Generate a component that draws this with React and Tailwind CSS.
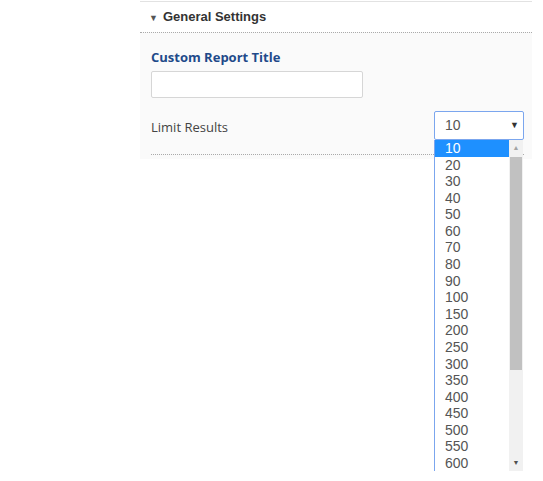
import React from 'react';

const options = [10, 20, 30, 40, 50, 60, 70, 80, 90, 100, 150, 200, 250, 300, 350, 400, 450, 500, 550, 600];

export default function App() {
  return (
    <div className="w-[543px] h-[481px] bg-white relative overflow-hidden font-['Open_Sans',sans-serif]">
      <div className="ml-[140px] w-[392px] pt-[1px]">
        {/* header */}
        <div className="border-t border-[#e2e2e2] h-[31px] flex items-center pl-[9px] gap-[5px]">
          <span className="text-[9px] text-[#555] leading-none">▼</span>
          <span className="font-['Liberation_Sans',sans-serif] font-bold text-[13px] text-[#333]">General Settings</span>
        </div>

        {/* body */}
        <div className="border-t border-dotted border-[#aaa] bg-[#fafafa] pl-[11px] pr-[8px] pt-[15px] pb-[4px]">
          <div className="font-bold text-[13px] leading-[18px] text-[#1f4a8a]">Custom Report Title</div>
          <input className="mt-[5px] block w-[212px] h-[27px] bg-white border border-[#d6d6d6] rounded-[2px] outline-none" />

          <div className="mt-[13px] h-[29px] flex items-center justify-between">
            <span className="pt-[4px] text-[13px] text-[#444]">Limit Results</span>
            <div className="w-[90px] h-[29px] bg-white border border-[#7ba6ee] rounded-[2px] flex items-center justify-between pl-[10px] pr-[4px] font-['Liberation_Sans',sans-serif] text-[14px] text-[#555]">
              <span>10</span>
              <span className="text-[9px] text-[#333]">▼</span>
            </div>
          </div>

          <div className="mt-[14px] border-t border-dotted border-[#aaa]" />
        </div>
      </div>

      {/* open dropdown list */}
      <div className="absolute left-[434px] top-[140px] w-[89px] h-[331px] bg-white border-l border-[#7ba6ee] flex font-['Liberation_Sans',sans-serif] text-[14px]">
        <div className="flex-1 flex flex-col">
          {options.map((o, i) => (
            <div
              key={o}
              className={
                'h-[16.58px] leading-[16.58px] pl-[10px] ' +
                (i === 0 ? 'bg-[#1e90ff] text-white' : 'text-[#555]')
              }
            >
              {o}
            </div>
          ))}
        </div>
        <div className="w-[14px] bg-[#f1f1f1] flex flex-col">
          <div className="h-[17px] flex items-center justify-center text-[7px] text-[#a3a3a3]">▲</div>
          <div className="h-[213px] mx-[1px] bg-[#c1c1c1]" />
          <div className="flex-1" />
          <div className="h-[16px] flex items-center justify-center text-[7px] text-[#505050]">▼</div>
        </div>
      </div>
    </div>
  );
}
